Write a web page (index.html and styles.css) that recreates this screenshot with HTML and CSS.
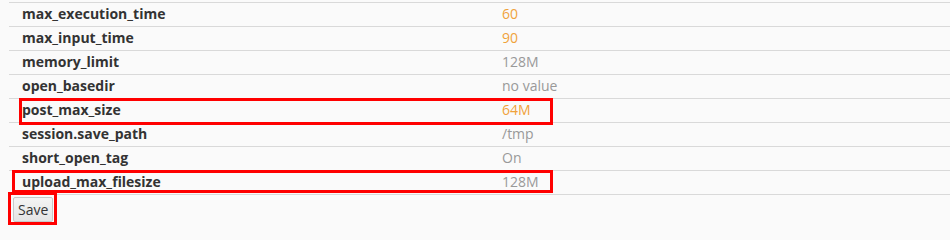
FILE: index.html
```html
<!DOCTYPE html>
<html>
<head>
<meta charset="utf-8">
<link rel="stylesheet" href="styles.css">
</head>
<body>
<div class="page">
  <div class="table">
    <div class="row"><div class="key">max_execution_time</div><div class="val orange">60</div></div>
    <div class="row"><div class="key">max_input_time</div><div class="val orange">90</div></div>
    <div class="row"><div class="key">memory_limit</div><div class="val gray">128M</div></div>
    <div class="row"><div class="key">open_basedir</div><div class="val gray">no value</div></div>
    <div class="row"><div class="key">post_max_size</div><div class="val orange">64M</div></div>
    <div class="row"><div class="key">session.save_path</div><div class="val gray">/tmp</div></div>
    <div class="row"><div class="key">short_open_tag</div><div class="val gray">On</div></div>
    <div class="row"><div class="key">upload_max_filesize</div><div class="val gray">128M</div></div>
  </div>
  <div class="actions"><button class="btn">Save</button></div>
  <div class="mark mark-post"></div>
  <div class="mark mark-upload"></div>
  <div class="mark mark-save"></div>
</div>
</body>
</html>
```

FILE: styles.css
```css
html, body {
  margin: 0;
  padding: 0;
  background: #fafafa;
  overflow: hidden;
}
body {
  font-family: "Open Sans", "Liberation Sans", sans-serif;
  font-size: 14px;
  color: #333;
}
.page {
  position: relative;
  padding: 2px 0 0 9px;
}
.table {
  border-top: 1px solid #d9d9d9;
}
.row {
  display: grid;
  grid-template-columns: 493px 1fr;
  height: 23px;
  line-height: 22px;
  border-bottom: 1px solid #d9d9d9;
}
.key {
  padding-left: 13px;
  font-weight: 700;
  color: #333;
}
.orange { color: #f0a23a; }
.gray { color: #999; }
.actions {
  display: flex;
  padding: 2px 0 4px 4px;
}
.btn {
  font-family: "Open Sans", "Liberation Sans", sans-serif;
  font-size: 14px;
  color: #333;
  background: linear-gradient(#f4f4f4, #e4e4e4);
  border: 1px solid #c8c8c8;
  border-radius: 2px;
  height: 25px;
  padding: 0 4px;
  line-height: 21px;
}
.mark {
  position: absolute;
  border: 3px solid #f00;
  box-sizing: border-box;
}
.mark-post { left: 19px; top: 98px; width: 534px; height: 27px; }
.mark-upload { left: 12px; top: 170px; width: 541px; height: 23px; }
.mark-save { left: 8px; top: 192px; width: 49px; height: 33px; }
```
